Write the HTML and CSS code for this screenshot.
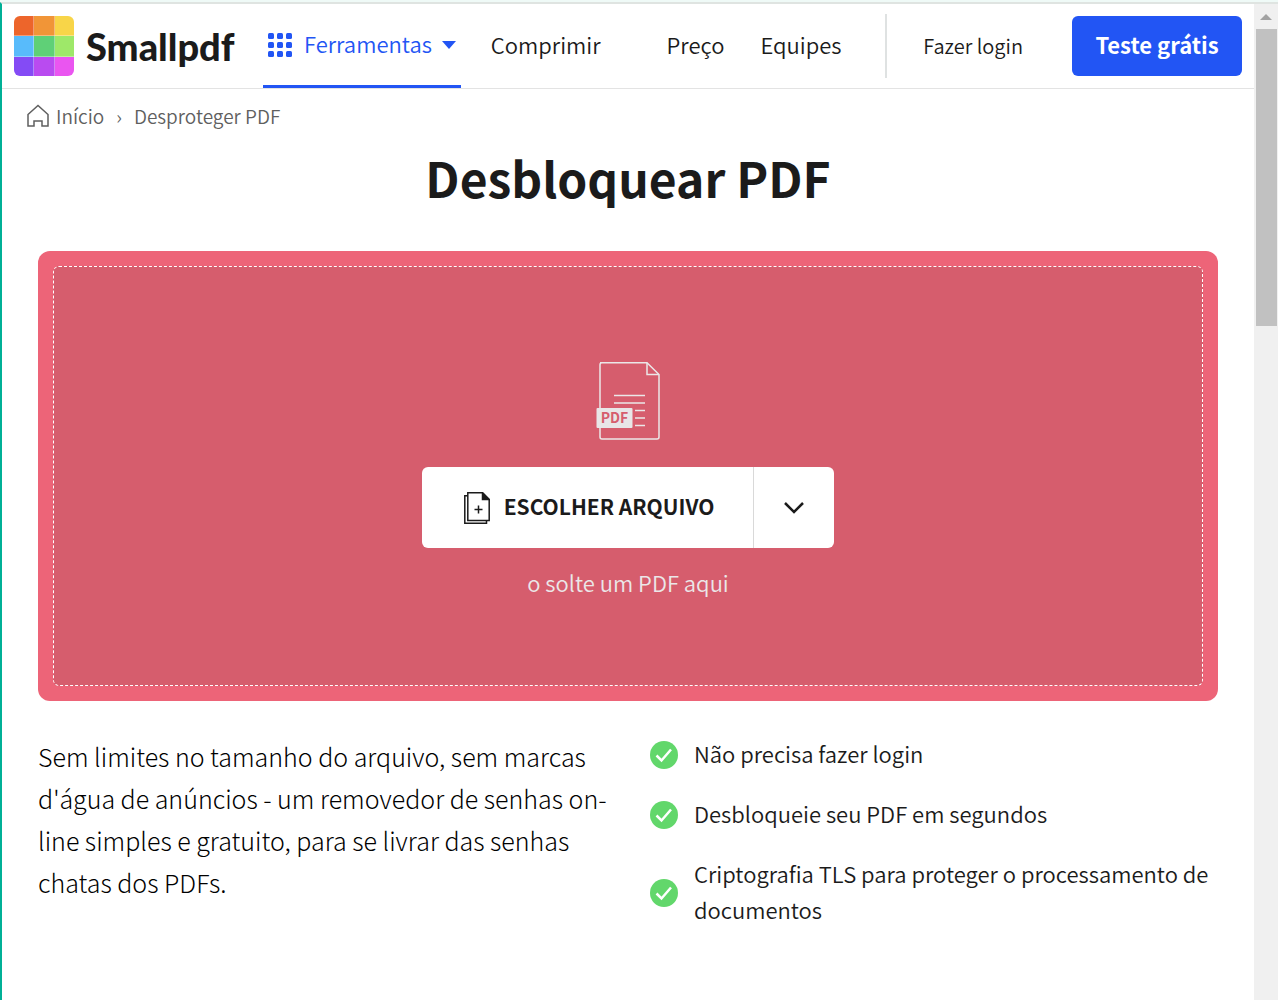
FILE: index.html
```
<!DOCTYPE html>
<html lang="pt-BR">
<head>
  <meta charset="UTF-8">
  <meta name="viewport" content="width=device-width, initial-scale=1">
  <title>Desbloquear PDF - Smallpdf</title>
  <link rel="stylesheet" href="styles.css">
</head>
<body>

  <div class="window">
    <div class="page">

      <header class="header">
        <a class="logo" href="#">
          <svg width="60" height="60" viewBox="0 0 60 60" aria-hidden="true">
            <clipPath id="round"><rect width="60" height="60" rx="6"/></clipPath>
            <g clip-path="url(#round)">
              <rect width="60" height="60" fill="#fff" />
              <rect width="20" height="20" fill="#ed652b"/>
              <rect x="20" width="21" height="20" fill="#f19537"/>
              <rect x="41" width="19" height="20" fill="#f8d548"/>
              <rect y="20" width="20" height="21" fill="#58bbfb"/>
              <rect x="20" y="20" width="21" height="21" fill="#5fd077"/>
              <rect x="41" y="20" width="19" height="21" fill="#9ee869"/>
              <rect y="41" width="20" height="19" fill="#844bf5"/>
              <rect x="20" y="41" width="21" height="19" fill="#b94bf0"/>
              <rect x="41" y="41" width="19" height="19" fill="#ea55f0"/>
              <path d="M19.500 0v60M40.500 0v60M0 19.500h60M0 40.500h60" stroke="#fff" stroke-opacity=".35"/>
            </g>
          </svg>
          <span>Smallpdf</span>
        </a>

        <nav class="nav">
          <button class="tools" type="button">
            <svg width="24" height="24" viewBox="0 0 24 24" fill="currentColor" aria-hidden="true">
              <rect width="6" height="6" rx="1.500"/><rect x="9" width="6" height="6" rx="1.500"/><rect x="18" width="6" height="6" rx="1.500"/>
              <rect y="9" width="6" height="6" rx="1.500"/><rect x="9" y="9" width="6" height="6" rx="1.500"/><rect x="18" y="9" width="6" height="6" rx="1.500"/>
              <rect y="18" width="6" height="6" rx="1.500"/><rect x="9" y="18" width="6" height="6" rx="1.500"/><rect x="18" y="18" width="6" height="6" rx="1.500"/>
            </svg>
            <span class="label">Ferramentas</span>
            <svg class="caret" width="14" height="8" viewBox="0 0 14 8" aria-hidden="true"><path d="M0 0h14L7 8z" fill="currentColor"/></svg>
          </button>
          <a class="label compress" href="#">Comprimir</a>
          <a class="label price" href="#">Preço</a>
          <a class="label" href="#">Equipes</a>
        </nav>

        <div class="account">
          <a class="login" href="#">Fazer login</a>
          <button class="trial" type="button"><span class="label">Teste grátis</span></button>
        </div>
      </header>

      <nav class="breadcrumb">
        <a href="#">
          <svg width="24" height="24" viewBox="0 0 24 24" fill="none" stroke="currentColor" stroke-width="1.500" aria-hidden="true">
            <path d="M2 10.500 12 1.500l10 9V22h-6v-5H8v5H2z"/>
          </svg>
          Início
        </a>
        <span>›</span>
        <span>Desproteger PDF</span>
      </nav>

      <main class="main">
        <h1>Desbloquear PDF</h1>

        <section class="dropzone">
          <div class="droparea">
            <svg width="64" height="80" viewBox="0 0 64 80" fill="none" stroke="#ebe7e8" stroke-width="1.500" aria-hidden="true">
              <path d="M4 1.800h47L63 13.500V76q0 2-2 2H6q-2 0-2-2V3.800q0-2 2-2z"/>
              <path d="M51 1.800v11.700h12M18 34.500h31M18 42h31M39 49.500h10M39 57h10M39 64.500h10"/>
              <rect x=".5" y="47" width="36" height="20" rx="1" fill="#e8e6e7" stroke="none"/>
              <text x="18.500" y="62" class="file-label">PDF</text>
            </svg>

            <div class="chooser">
              <button class="choose" type="button">
                <svg width="26" height="32" viewBox="0 0 26 32" fill="none" stroke="#1b1b1b" stroke-width="1.500" aria-hidden="true">
                  <path d="M3.800.8h14.700l6.700 6.700v21H3.800z"/>
                  <path d="M3.800 3.800h-3v27.400h21.700v-2.700"/>
                  <path d="M18.500.8v6.700h6.700z" fill="#1b1b1b"/>
                  <path d="M14.500 13.500v8M10.500 17.500h8"/>
                </svg>
                <span class="label">ESCOLHER ARQUIVO</span>
              </button>
              <button class="more" type="button" aria-label="Mais opções">
                <svg width="20" height="12" viewBox="0 0 20 12" fill="none" stroke="#1b1b1b" stroke-width="2.500" aria-hidden="true"><path d="M1 1l9 9 9-9"/></svg>
              </button>
            </div>

            <p>o solte um PDF aqui</p>
          </div>
        </section>

        <section class="info">
          <p>Sem limites no tamanho do arquivo, sem marcas d'água de anúncios - um removedor de senhas on-line simples e gratuito, para se livrar das senhas chatas dos PDFs.</p>
          <ul>
            <li>
              <svg class="check" viewBox="0 0 28 28" aria-hidden="true"><circle cx="14" cy="14" r="14" fill="#62d76b"/><path d="M6.500 14.500l5 5 9.500-11" fill="none" stroke="#fff" stroke-width="2.500"/></svg>
              <span class="label">Não precisa fazer login</span>
            </li>
            <li>
              <svg class="check" viewBox="0 0 28 28" aria-hidden="true"><circle cx="14" cy="14" r="14" fill="#62d76b"/><path d="M6.500 14.500l5 5 9.500-11" fill="none" stroke="#fff" stroke-width="2.500"/></svg>
              <span class="label">Desbloqueie seu PDF em segundos</span>
            </li>
            <li>
              <svg class="check" viewBox="0 0 28 28" aria-hidden="true"><circle cx="14" cy="14" r="14" fill="#62d76b"/><path d="M6.500 14.500l5 5 9.500-11" fill="none" stroke="#fff" stroke-width="2.500"/></svg>
              <span class="label">Criptografia TLS para proteger o processamento de documentos</span>
            </li>
          </ul>
        </section>
      </main>
    </div>

    <div class="scrollbar" aria-hidden="true">
      <svg width="12" height="6" viewBox="0 0 12 6"><path d="M0 6l6-6 6 6z" fill="#a2a2a2"/></svg>
      <div class="thumb"></div>
    </div>
  </div>

</body>
</html>
```

FILE: styles.css
```
* {
  box-sizing: border-box;
}
body {
  margin: 0;
  font-family: "Noto Sans CJK SC", sans-serif;
  font-size: 22px;
  font-weight: 350;
  line-height: 36px;
  color: #1b1b1b;
  background: #fff;
  border-top: 2px solid #effaf7;
}
a {
  color: inherit;
  text-decoration: none;
}
button {
  font: inherit;
  color: inherit;
  border: none;
  background: none;
  padding: 0;
  cursor: pointer;
}
svg {
  display: block;
  flex-shrink: 0;
}
/* the font sits low in its line, this centres it optically */
.label {
  display: block;
  padding-bottom: 4px;
}

.window {
  display: flex;
  min-height: calc(100vh - 2px);
  border-left: 2px solid #00b096;
  border-top: 2px solid #dfe4e1;
}
.page {
  flex: 1;
  min-width: 0;
}

/* Header */
.header {
  display: flex;
  align-items: center;
  height: 85px;
  padding: 0 12px;
  border-bottom: 1px solid #e3e3e3;
  white-space: nowrap;
}
.logo {
  display: flex;
  flex-shrink: 0;
  align-items: center;
  gap: 12px;
  width: 249px;
  font-family: Lato, sans-serif;
  font-size: 38px;
  font-weight: 900;
}
.nav {
  display: flex;
  align-items: center;
  align-self: stretch;
}
.tools {
  display: flex;
  align-items: center;
  align-self: stretch;
  gap: 12px;
  padding: 0 5px;
  border-bottom: 3px solid #2255f4;
  color: #2255f4;
}
.caret {
  margin-left: -2px;
}
.compress {
  margin: 0 66px 0 30px;
}
.price {
  margin-right: 36px;
}
.account {
  display: flex;
  align-items: center;
  margin-left: auto;
}
.login {
  padding: 14px 49px 14px 36px;
  border-left: 2px solid #dfe2e2;
  font-size: 20px;
}
.trial {
  width: 170px;
  height: 60px;
  border-radius: 6px;
  background: #2255f4;
  color: #fff;
  font-weight: 700;
}

/* Breadcrumb */
.breadcrumb {
  display: flex;
  align-items: center;
  gap: 12px;
  padding: 9px 24px;
  font-size: 19px;
  color: #5f5f5f;
}
.breadcrumb a {
  display: flex;
  align-items: center;
  gap: 6px;
}

/* Main */
.main {
  padding: 0 36px 36px;
}
h1 {
  margin: 0 0 40px;
  text-align: center;
  font-size: 48px;
  line-height: 68px;
  font-weight: 700;
}
.dropzone {
  padding: 15px;
  border-radius: 12px;
  background: #ed6478;
}
.droparea {
  display: flex;
  flex-direction: column;
  align-items: center;
  height: 420px;
  padding-top: 94px;
  border: 1px dashed #fff;
  border-radius: 6px;
  background: #d65d6d;
}
.file-label {
  fill: #d65d6d;
  stroke: none;
  font-size: 14px;
  font-weight: 700;
  text-anchor: middle;
}
.chooser {
  display: flex;
  height: 81px;
  margin: 26px 0 16px;
  border-radius: 6px;
  background: #fff;
}
.choose {
  display: flex;
  align-items: center;
  gap: 14px;
  padding: 0 39px 0 42px;
  font-size: 21px;
  font-weight: 700;
}
.more {
  display: flex;
  align-items: center;
  justify-content: center;
  width: 81px;
  border-left: 1px solid #d9d9d9;
}
.droparea p {
  margin: 0;
  color: #ebe7e8;
}

/* Info */
.info {
  display: grid;
  grid-template-columns: 1fr 1fr;
  gap: 24px;
  padding-top: 34px;
}
.info p {
  margin: 0;
  font-size: 25px;
  font-weight: 300;
  line-height: 42px;
  color: #000;
}
.info ul {
  display: flex;
  flex-direction: column;
  gap: 20px;
  margin: 0;
  padding: 0 0 0 10px;
  list-style: none;
}
.info li {
  display: flex;
  align-items: center;
  gap: 16px;
}
.check {
  width: 28px;
  height: 28px;
}

/* Scrollbar */
.scrollbar {
  display: flex;
  flex-direction: column;
  align-items: center;
  gap: 9px;
  width: 24px;
  padding-top: 10px;
  background: #f0f0f0;
}
.thumb {
  width: 21px;
  height: 297px;
  background: #c1c1c1;
}
```
